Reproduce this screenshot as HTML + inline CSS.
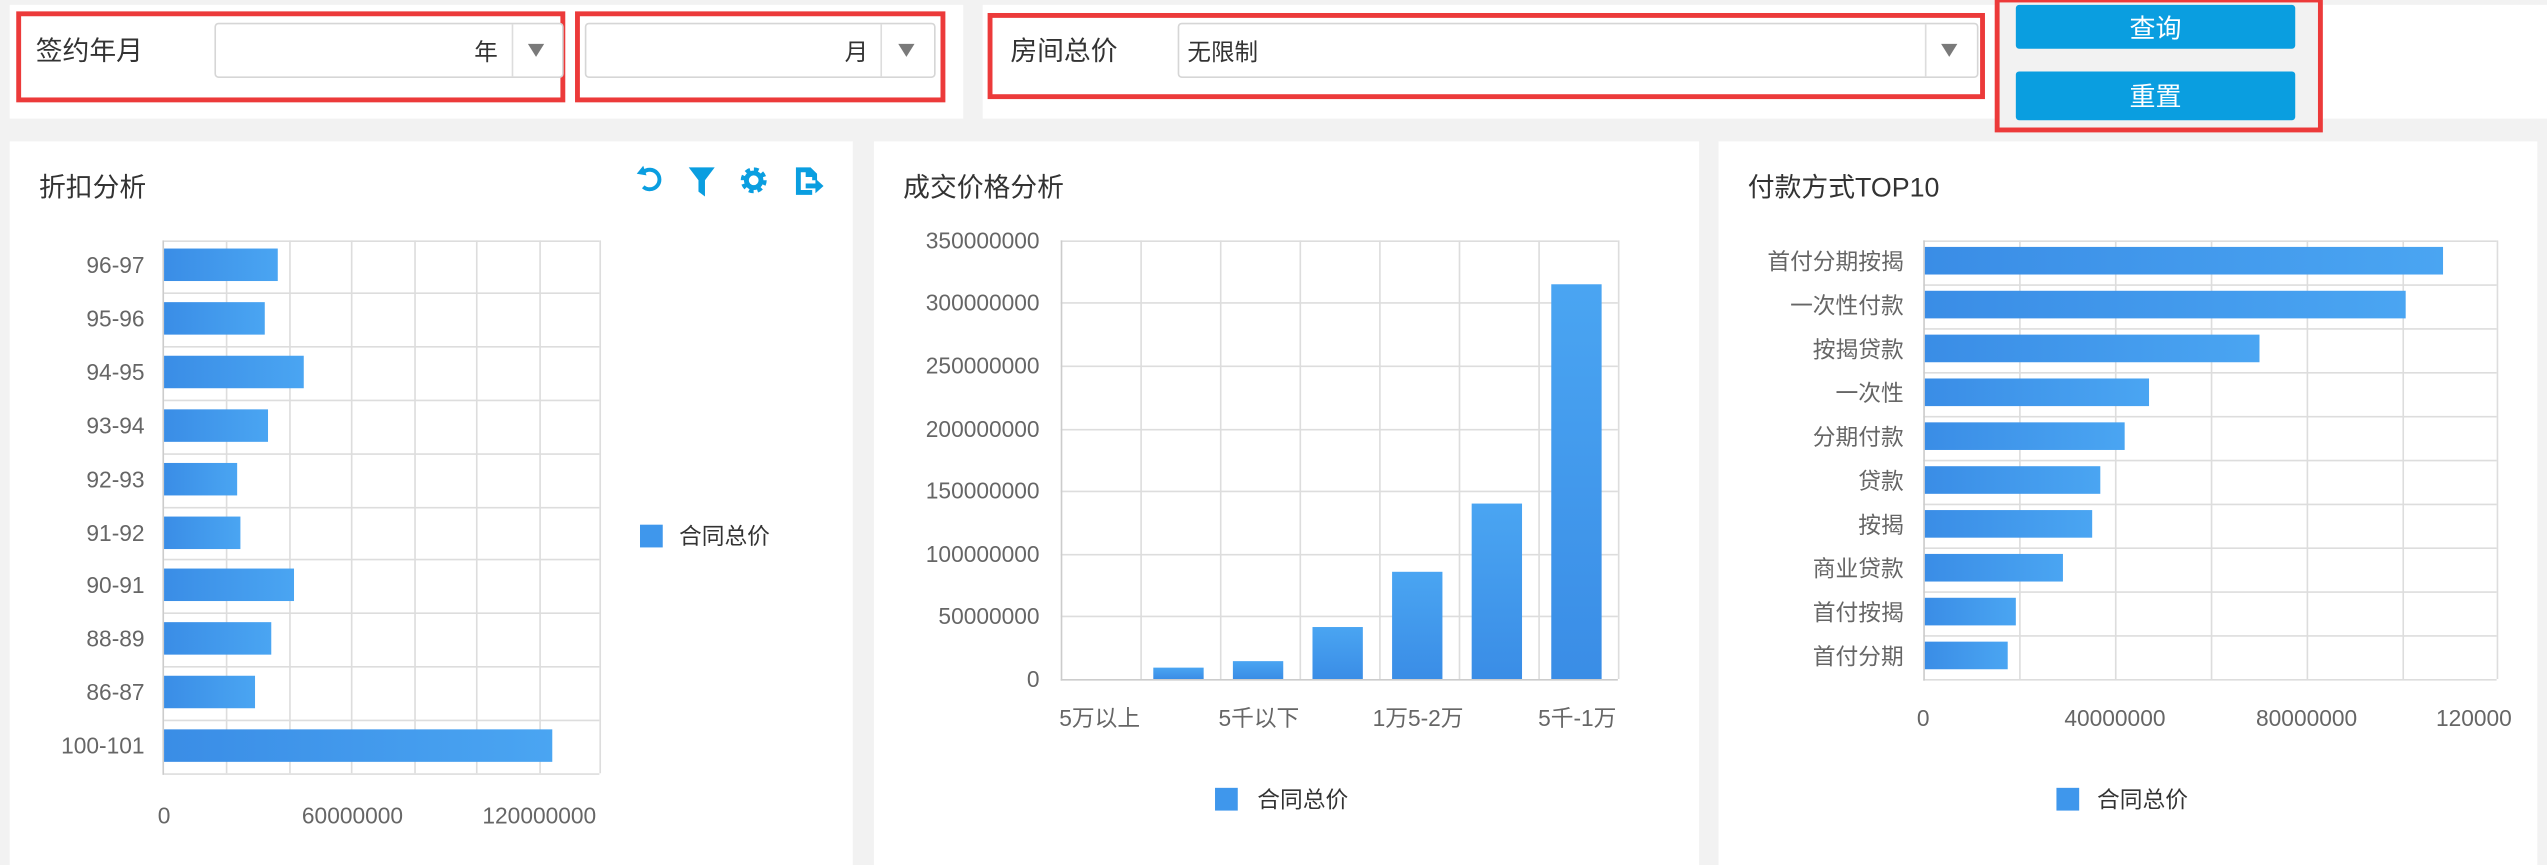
<!DOCTYPE html>
<html><head><meta charset="utf-8"><style>
html,body{margin:0;padding:0;background:#f2f2f2;width:2547px;height:865px;overflow:hidden}
svg{display:block}
text{font-family:"Liberation Sans","Noto Sans CJK SC",sans-serif}
</style></head><body>
<svg width="2547" height="865" viewBox="0 0 1568 532.5" preserveAspectRatio="none" xmlns="http://www.w3.org/2000/svg">
<defs>
<linearGradient id="g" x1="0" y1="0" x2="1" y2="0"><stop offset="0" stop-color="#3a8de6"/><stop offset="1" stop-color="#4aa5f2"/></linearGradient>
<linearGradient id="gv" x1="0" y1="0" x2="0" y2="1"><stop offset="0" stop-color="#4aa5f2"/><stop offset="1" stop-color="#3a8de6"/></linearGradient>
</defs>
<rect width="1568" height="533" fill="#f2f2f2"/>
<!-- top panels -->
<rect x="6" y="3" width="587" height="70" fill="#fff"/>
<rect x="605" y="3" width="623" height="70" fill="#fff"/>
<rect x="1430" y="3" width="138" height="70" fill="#fff"/>
<g fill="none" stroke="#ec3a3a" stroke-width="3">
<rect x="11.5" y="8.5" width="335" height="53"/>
<rect x="355.5" y="8.5" width="225" height="53"/>
<rect x="609.5" y="9.5" width="611" height="50"/>
<rect x="1229.5" y="0" width="199" height="80"/>
</g>
<g font-size="16.5" fill="#333">
<text x="22" y="37">签约年月</text>
<text x="622" y="37">房间总价</text>
</g>
<g fill="#fff" stroke="#d6d6d6" stroke-width="1">
<rect x="132.5" y="14.5" width="214" height="33" rx="2"/>
<rect x="360.5" y="14.5" width="215" height="33" rx="2"/>
<rect x="725.5" y="14.5" width="492" height="33" rx="2"/>
</g>
<g stroke="#ddd"><line x1="315.5" y1="15" x2="315.5" y2="47"/><line x1="542.5" y1="15" x2="542.5" y2="47"/><line x1="1185.5" y1="15" x2="1185.5" y2="47"/></g>
<g fill="#7a7a7a"><path d="M325 27h10l-5 8z"/><path d="M553 27h10l-5 8z"/><path d="M1195 27h10l-5 8z"/></g>
<g font-size="14.5" fill="#333"><text x="292" y="37">年</text><text x="520" y="37">月</text><text x="731" y="37">无限制</text></g>
<rect x="1241" y="3" width="172" height="27" rx="2" fill="#0a9ee0"/>
<rect x="1241" y="44" width="172" height="30" rx="2" fill="#0a9ee0"/>
<g font-size="16" fill="#fff" text-anchor="middle"><text x="1327" y="23">查询</text><text x="1327" y="65">重置</text></g>
<!-- chart panels -->
<rect x="6" y="87" width="519" height="446" fill="#fff"/>
<rect x="538" y="87" width="508" height="446" fill="#fff"/>
<rect x="1058" y="87" width="504" height="446" fill="#fff"/>
<g font-size="16.5" fill="#333"><text x="24" y="121">折扣分析</text><text x="556" y="121">成交价格分析</text><text x="1076" y="121">付款方式TOP10</text></g>
<!-- icons -->
<g fill="#0a9ee0" stroke="#0a9ee0">
<path d="M396 106a6 6 0 1 1 0 9" fill="none" stroke-width="2.4"/><path d="M392 107l4-5 2 6z" stroke="none"/>
<path d="M424 103h16l-6 8v10l-4-3v-7z" stroke="none"/>
<circle cx="464" cy="111" r="6" stroke-width="4" stroke-dasharray="2.6 2.1" fill="none"/><circle cx="464" cy="111" r="4.5" fill="none" stroke-width="3"/>
<path d="M490 103h9l4 4v4h-3v-2h-4v-3h-3v11h7v3h-10z" stroke="none"/><path d="M496 113h6v-3l5 4.5-5 4.5v-3h-6z" stroke="none"/>
</g>
<!-- chart1 -->
<g stroke="#ddd" stroke-width="1">
<line x1="139.5" y1="148" x2="139.5" y2="476"/><line x1="178.5" y1="148" x2="178.5" y2="476"/><line x1="216.5" y1="148" x2="216.5" y2="476"/><line x1="255.5" y1="148" x2="255.5" y2="476"/><line x1="293.5" y1="148" x2="293.5" y2="476"/><line x1="332.5" y1="148" x2="332.5" y2="476"/><line x1="369.5" y1="148" x2="369.5" y2="476"/>
<line x1="101" y1="148.5" x2="369" y2="148.5"/><line x1="101" y1="180.5" x2="369" y2="180.5"/><line x1="101" y1="213.5" x2="369" y2="213.5"/><line x1="101" y1="246.5" x2="369" y2="246.5"/><line x1="101" y1="279.5" x2="369" y2="279.5"/><line x1="101" y1="312.5" x2="369" y2="312.5"/><line x1="101" y1="344.5" x2="369" y2="344.5"/><line x1="101" y1="377.5" x2="369" y2="377.5"/><line x1="101" y1="410.5" x2="369" y2="410.5"/><line x1="101" y1="443.5" x2="369" y2="443.5"/><line x1="101" y1="476.5" x2="369" y2="476.5"/>
</g>
<line x1="100.5" y1="148" x2="100.5" y2="477" stroke="#ccc"/>
<g fill="url(#g)">
<rect x="101" y="153" width="70" height="20"/><rect x="101" y="186" width="62" height="20"/><rect x="101" y="219" width="86" height="20"/><rect x="101" y="252" width="64" height="20"/><rect x="101" y="285" width="45" height="20"/><rect x="101" y="318" width="47" height="20"/><rect x="101" y="350" width="80" height="20"/><rect x="101" y="383" width="66" height="20"/><rect x="101" y="416" width="56" height="20"/><rect x="101" y="449" width="239" height="20"/>
</g>
<g font-size="14" fill="#666" text-anchor="end">
<text x="89" y="168">96-97</text><text x="89" y="201">95-96</text><text x="89" y="234">94-95</text><text x="89" y="267">93-94</text><text x="89" y="300">92-93</text><text x="89" y="333">91-92</text><text x="89" y="365">90-91</text><text x="89" y="398">88-89</text><text x="89" y="431">86-87</text><text x="89" y="464">100-101</text>
</g>
<g font-size="14" fill="#666" text-anchor="middle"><text x="101" y="507">0</text><text x="217" y="507">60000000</text><text x="332" y="507">120000000</text></g>
<rect x="394" y="323" width="14" height="14" fill="#3f97ec"/><text x="418" y="335" font-size="14" fill="#333">合同总价</text>
<!-- chart2 -->
<g stroke="#ddd">
<line x1="653" y1="148.5" x2="996" y2="148.5"/><line x1="653" y1="186.5" x2="996" y2="186.5"/><line x1="653" y1="225.5" x2="996" y2="225.5"/><line x1="653" y1="264.5" x2="996" y2="264.5"/><line x1="653" y1="302.5" x2="996" y2="302.5"/><line x1="653" y1="341.5" x2="996" y2="341.5"/><line x1="653" y1="379.5" x2="996" y2="379.5"/>
<line x1="702.5" y1="148" x2="702.5" y2="418"/><line x1="751.5" y1="148" x2="751.5" y2="418"/><line x1="800.5" y1="148" x2="800.5" y2="418"/><line x1="849.5" y1="148" x2="849.5" y2="418"/><line x1="898.5" y1="148" x2="898.5" y2="418"/><line x1="947.5" y1="148" x2="947.5" y2="418"/><line x1="996.5" y1="148" x2="996.5" y2="418"/>
</g>
<line x1="653.5" y1="148" x2="653.5" y2="419" stroke="#ccc"/><line x1="653" y1="418.5" x2="996" y2="418.5" stroke="#ccc"/>
<g fill="url(#gv)">
<rect x="710" y="411" width="31" height="7"/><rect x="759" y="407" width="31" height="11"/><rect x="808" y="386" width="31" height="32"/><rect x="857" y="352" width="31" height="66"/><rect x="906" y="310" width="31" height="108"/><rect x="955" y="175" width="31" height="243"/>
</g>
<g font-size="14" fill="#666" text-anchor="end">
<text x="640" y="153">350000000</text><text x="640" y="191">300000000</text><text x="640" y="230">250000000</text><text x="640" y="269">200000000</text><text x="640" y="307">150000000</text><text x="640" y="346">100000000</text><text x="640" y="384">50000000</text><text x="640" y="423">0</text>
</g>
<g font-size="14" fill="#666" text-anchor="middle"><text x="677" y="447">5万以上</text><text x="775" y="447">5千以下</text><text x="873" y="447">1万5-2万</text><text x="971" y="447">5千-1万</text></g>
<rect x="748" y="485" width="14" height="14" fill="#3f97ec"/><text x="774" y="497" font-size="14" fill="#333">合同总价</text>
<!-- chart3 -->
<g stroke="#ddd">
<line x1="1243.5" y1="148" x2="1243.5" y2="418"/><line x1="1302.5" y1="148" x2="1302.5" y2="418"/><line x1="1361.5" y1="148" x2="1361.5" y2="418"/><line x1="1420.5" y1="148" x2="1420.5" y2="418"/><line x1="1479.5" y1="148" x2="1479.5" y2="418"/><line x1="1537.5" y1="148" x2="1537.5" y2="418"/>
<line x1="1184" y1="148.5" x2="1537" y2="148.5"/><line x1="1184" y1="175.5" x2="1537" y2="175.5"/><line x1="1184" y1="202.5" x2="1537" y2="202.5"/><line x1="1184" y1="229.5" x2="1537" y2="229.5"/><line x1="1184" y1="256.5" x2="1537" y2="256.5"/><line x1="1184" y1="283.5" x2="1537" y2="283.5"/><line x1="1184" y1="310.5" x2="1537" y2="310.5"/><line x1="1184" y1="337.5" x2="1537" y2="337.5"/><line x1="1184" y1="364.5" x2="1537" y2="364.5"/><line x1="1184" y1="391.5" x2="1537" y2="391.5"/><line x1="1184" y1="418.5" x2="1537" y2="418.5"/>
</g>
<line x1="1184.5" y1="148" x2="1184.5" y2="419" stroke="#ccc"/>
<g fill="url(#g)">
<rect x="1185" y="152" width="319" height="17"/><rect x="1185" y="179" width="296" height="17"/><rect x="1185" y="206" width="206" height="17"/><rect x="1185" y="233" width="138" height="17"/><rect x="1185" y="260" width="123" height="17"/><rect x="1185" y="287" width="108" height="17"/><rect x="1185" y="314" width="103" height="17"/><rect x="1185" y="341" width="85" height="17"/><rect x="1185" y="368" width="56" height="17"/><rect x="1185" y="395" width="51" height="17"/>
</g>
<g font-size="14" fill="#666" text-anchor="end">
<text x="1172" y="166">首付分期按揭</text><text x="1172" y="193">一次性付款</text><text x="1172" y="220">按揭贷款</text><text x="1172" y="247">一次性</text><text x="1172" y="274">分期付款</text><text x="1172" y="301">贷款</text><text x="1172" y="328">按揭</text><text x="1172" y="355">商业贷款</text><text x="1172" y="382">首付按揭</text><text x="1172" y="409">首付分期</text>
</g>
<g font-size="14" fill="#666" text-anchor="middle"><text x="1184" y="447">0</text><text x="1302" y="447">40000000</text><text x="1420" y="447">80000000</text><text x="1523" y="447">120000</text></g>
<rect x="1266" y="485" width="14" height="14" fill="#3f97ec"/><text x="1291" y="497" font-size="14" fill="#333">合同总价</text>
</svg>
</body></html>
